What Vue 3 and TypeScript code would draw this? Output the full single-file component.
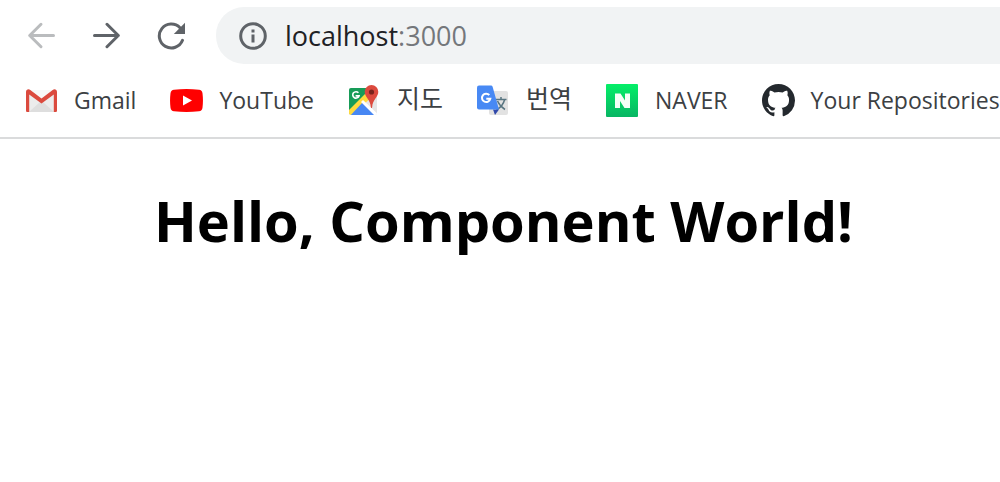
<script setup lang="ts">
import { ref } from 'vue'

interface Bookmark {
  id: string
  label: string
  href: string
  lang: string
}

const host = ref('localhost')

const bookmarks: Bookmark[] = [
  { id: 'gmail', label: 'Gmail', href: '#gmail', lang: 'en' },
  { id: 'youtube', label: 'YouTube', href: '#youtube', lang: 'en' },
  { id: 'maps', label: '지도', href: '#maps', lang: 'ko' },
  { id: 'translate', label: '번역', href: '#translate', lang: 'ko' },
  { id: 'naver', label: 'NAVER', href: '#naver', lang: 'en' },
  { id: 'github', label: 'Your Repositories', href: '#repositories', lang: 'en' },
]
</script>

<template>
  <div class="browser">
    <header class="chrome">
      <div class="toolbar">
        <button class="tool" type="button" aria-label="Back" disabled>
          <svg viewBox="0 0 28 28" fill="none" stroke="#babcbe" stroke-width="3" stroke-linecap="round" stroke-linejoin="round">
            <path d="M26.500 13.500H2.800M14 2.300L2.700 13.500 14 24.700" />
          </svg>
        </button>
        <button class="tool" type="button" aria-label="Forward">
          <svg viewBox="0 0 28 28" fill="none" stroke="#5f6368" stroke-width="3" stroke-linecap="round" stroke-linejoin="round">
            <path d="M2.500 13.500h23.700M15 2.300L26.300 13.500 15 24.700" />
          </svg>
        </button>
        <button class="tool" type="button" aria-label="Reload">
          <svg viewBox="0 0 28 28">
            <path d="M25.500 18.300A12 12 0 1 1 23 5.700" fill="none" stroke="#5f6368" stroke-width="3" stroke-linecap="round" />
            <path d="M28 .8v11.200H16.800z" fill="#5f6368" />
          </svg>
        </button>
        <div class="address">
          <button class="info" type="button" aria-label="View site information">
            <svg viewBox="0 0 28 28">
              <circle cx="14" cy="14" r="12.3" fill="none" stroke="#5f6368" stroke-width="3" />
              <path d="M12.500 7.500h3v3h-3zM12.500 12.500h3v8h-3z" fill="#5f6368" />
            </svg>
          </button>
          <label class="url">
            <input v-model="host" type="text" aria-label="Address" size="9" spellcheck="false" />
            <span class="port">:3000</span>
          </label>
        </div>
      </div>

      <nav class="bookmarks" aria-label="Bookmarks">
        <a v-for="item in bookmarks" :key="item.id" class="bookmark" :lang="item.lang" :href="item.href">
          <svg v-if="item.id === 'gmail'" viewBox="0 0 33 33">
            <path d="M3 6h27v22H3z" fill="#ececec" />
            <path d="M4 28l11-10h3l11 10z" fill="#dedede" />
            <path d="M5 6h23L16.500 15.500z" fill="#f7f7f7" />
            <path d="M1 8c0-2.500 2.500-3.400 4.300-2l11.200 8.400L27.700 6c1.800-1.400 4.300-.5 4.300 2v18.500c0 1-.6 1.500-1.500 1.500H28.800V10.600l-12.300 9L4.200 10.600V28H2.500C1.600 28 1 27.500 1 26.500z" fill="#db4a3e" />
          </svg>
          <svg v-else-if="item.id === 'youtube'" viewBox="0 0 33 33">
            <path d="M4 5.700Q16.500 4.300 29 5.700q3 .3 3.500 3.500 .9 7.300 0 14.600-.5 3.200-3.500 3.500-12.500 1.400-25 0-3-.3-3.500-3.500-.9-7.300 0-14.600Q1 6 4 5.700z" fill="#f00" />
            <path d="M13 11.500v10l9-5z" fill="#fff" />
          </svg>
          <svg v-else-if="item.id === 'maps'" viewBox="0 0 33 33">
            <defs><clipPath id="map-sheet"><rect x="1" y="4" width="28" height="27" rx="2" /></clipPath></defs>
            <g clip-path="url(#map-sheet)">
              <path d="M0 3h31v29H0z" fill="#e6e6e6" />
              <path d="M0 3h28L0 31z" fill="#179c58" />
              <path d="M0 27L22 5l5 5L0 35z" fill="#ffda3e" />
              <path d="M1 33L14.500 18.500 29 33z" fill="#4787f3" />
              <path d="M13 18l2-2L32 32l-3 2z" fill="#fff" />
            </g>
            <path d="M10.400 8.800a3.200 3.200 0 1 0 .6 3.100H7.600" fill="none" stroke="#fff" stroke-width="1.600" />
            <path d="M23.500 1a6.800 6.800 0 0 0-6.800 6.800c0 5.500 5.600 7.200 6.200 15.700q.6 1 1.200 0c.6-8.500 6.200-10.200 6.200-15.700A6.800 6.800 0 0 0 23.500 1z" fill="#dc4a3e" />
            <circle cx="23.500" cy="8" r="2.600" fill="#7b241d" />
          </svg>
          <svg v-else-if="item.id === 'translate'" viewBox="0 0 33 33">
            <rect x="12" y="7" width="19" height="24" rx="2" fill="#e2e2e2" />
            <path d="M18.500 15.500h11M24 13v3M27.500 16q-1.500 6-8 10M20.500 17q2.500 5.500 7.500 8.500" fill="none" stroke="#587581" stroke-width="1.500" />
            <path d="M16 25.500h6L18 31z" fill="#3049aa" />
            <path d="M2 1.500h12q1.200 0 1.600 1.200l6.400 22.800H2q-2 0-2-2v-20q0-2 2-2z" fill="#4889f4" />
            <path d="M12.300 11a4.200 4.200 0 1 0 1 3.800H9.300" fill="none" stroke="#fff" stroke-width="2" />
          </svg>
          <svg v-else-if="item.id === 'naver'" viewBox="0 0 33 33">
            <defs>
              <linearGradient id="naver-green" x1="0" y1="0" x2="0" y2="1">
                <stop offset="0" stop-color="#04ef68" />
                <stop offset="1" stop-color="#08b563" />
              </linearGradient>
            </defs>
            <rect width="32" height="33" rx="1" fill="url(#naver-green)" />
            <path d="M9 9.500h5.500l4.500 7v-7h5V24h-5.500L14 17v7H9z" fill="#f4fff7" />
          </svg>
          <svg v-else viewBox="0 0 16 16">
            <path fill="#24292e" d="M8 0C3.580 0 0 3.580 0 8c0 3.540 2.290 6.530 5.470 7.590.4.070.55-.17.55-.38 0-.19-.01-.82-.01-1.490-2.010.37-2.530-.49-2.690-.94-.09-.23-.48-.94-.82-1.130-.28-.15-.68-.52-.01-.53.63-.01 1.080.58 1.230.82.72 1.210 1.870.87 2.330.66.07-.52.28-.87.51-1.070-1.780-.2-3.640-.89-3.640-3.950 0-.87.31-1.590.82-2.150-.08-.2-.36-1.020.08-2.120 0 0 .67-.21 2.200.82.64-.18 1.320-.27 2-.27s1.360.09 2 .27c1.530-1.040 2.200-.82 2.200-.82.44 1.100.16 1.920.08 2.120.51.56.82 1.270.82 2.150 0 3.070-1.870 3.750-3.650 3.950.29.25.54.73.54 1.480 0 1.070-.01 1.930-.01 2.200 0 .21.15.46.55.38A8.010 8.010 0 0 0 16 8c0-4.420-3.580-8-8-8z" />
          </svg>
          <span>{{ item.label }}</span>
        </a>
      </nav>
    </header>

    <main class="page">
      <h1>Hello, Component World!</h1>
    </main>
  </div>
</template>

<style>
body {
  margin: 0;
  background: #fff;
}
</style>

<style scoped>
.browser {
  min-height: 100vh;
  overflow: hidden;
  font-family: "Open Sans", "Noto Sans CJK KR", sans-serif;
  color: #000;
}

.chrome {
  border-bottom: 2px solid #dadbdc;
}

.toolbar {
  display: flex;
  align-items: center;
  gap: 37px;
  padding: 7px 0 0 27px;
}

button {
  display: flex;
  flex: none;
  padding: 0;
  border: 0;
  background: none;
}

.tool svg,
.info svg {
  display: block;
  width: 28px;
  height: 28px;
}

.address {
  display: flex;
  flex: 1;
  align-items: center;
  gap: 18px;
  height: 57px;
  margin-left: -6px;
  padding-left: 23px;
  border-radius: 28px 0 0 28px;
  background: #f1f3f4;
}

.url {
  display: flex;
  align-items: center;
  font-size: 27px;
  line-height: 36px;
}

.url input {
  field-sizing: content;
  padding: 0;
  border: 0;
  outline: 0;
  background: none;
  color: #202124;
  font: inherit;
}

.port {
  color: #74777b;
}

.bookmarks {
  display: flex;
  gap: 34px;
  height: 73px;
  padding-left: 25px;
  align-items: center;
  white-space: nowrap;
}

.bookmark {
  display: flex;
  flex: none;
  align-items: center;
  gap: 16px;
  color: #3c4043;
  font-size: 23px;
  line-height: 32px;
  text-decoration: none;
}

.bookmark span {
  padding-bottom: 2px;
}

.bookmark:lang(ko) {
  font-size: 25px;
}

.bookmark:lang(ko) span {
  padding-bottom: 6px;
}

.bookmark svg {
  flex: none;
  width: 33px;
  height: 33px;
}

.page h1 {
  margin: 39px 0;
  padding-left: 154px;
  font-size: 56px;
  font-weight: 700;
  line-height: 84px;
  white-space: nowrap;
}
</style>
